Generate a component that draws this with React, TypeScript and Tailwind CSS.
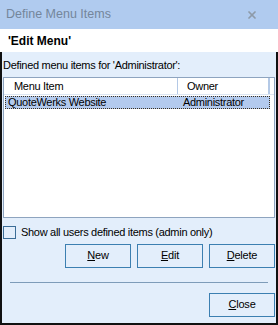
import { X } from 'lucide-react';

function Btn({ k, rest }: { k: string; rest: string }) {
  return (
    <button className="flex h-[24px] w-[66px] items-center justify-center border border-[#3c7fb1] bg-[#e3eefb] text-[11px] tracking-[-0.2px] text-black">
      <span className="underline underline-offset-1">{k}</span>
      {rest}
    </button>
  );
}

export default function App() {
  return (
    <div className="flex h-[325px] w-[278px] flex-col bg-[#e3eefb] font-['Liberation_Sans',sans-serif] text-[11px] tracking-[-0.3px] text-black">
      <div className="flex h-[29px] shrink-0 items-center justify-between bg-[#b0cbef] pl-[6px] pr-[20px]">
        <span className="text-[12.5px] tracking-normal text-[#74869b]">Define Menu Items</span>
        <X size={12} strokeWidth={3.5} className="text-[#8d9aa8]" />
      </div>
      <div className="flex h-[23px] shrink-0 items-center bg-white pl-[8px] text-[12px] font-bold tracking-normal">
        'Edit Menu'
      </div>
      <div className="flex flex-1 flex-col border-x-2 border-b-2 border-[#111]">
        <div className="mt-[6px] pl-[1px] leading-[14px]">Defined menu items for 'Administrator':</div>
        <div className="mx-[1px] mt-[5px] flex h-[141px] flex-col border border-[#8ea4bf] bg-white">
          <div className="flex h-[17px] items-center border-b border-[#dde6f2]">
            <div className="flex h-full w-[174px] items-center border-r border-[#b4c9e6] pl-[10px]">Menu Item</div>
            <div className="flex h-full w-[92px] items-center border-r-2 border-[#b4c9e6] pl-[9px]">Owner</div>
          </div>
          <div className="mx-[1px] mt-[1px] flex h-[13px] w-[265px] items-center border border-dotted border-[#3a3020] bg-[#b3caee]">
            <div className="w-[177px] pl-[2px]">QuoteWerks Website</div>
            <div>Administrator</div>
          </div>
        </div>
        <div className="mt-[6px] flex items-center gap-[5px] pl-[1px]">
          <div className="h-[13px] w-[13px] border border-[#3c6d97] bg-[#e3eefb]" />
          <span>Show all users defined items (admin only)</span>
        </div>
        <div className="mt-[3px] flex justify-end gap-[6px] pr-[1px]">
          <Btn k="N" rest="ew" />
          <Btn k="E" rest="dit" />
          <Btn k="D" rest="elete" />
        </div>
        <div className="mx-[8px] mt-[14px] h-px bg-[#7e9cb9]" />
        <div className="mt-[10px] flex justify-end pr-[1px]">
          <Btn k="C" rest="lose" />
        </div>
      </div>
    </div>
  );
}
